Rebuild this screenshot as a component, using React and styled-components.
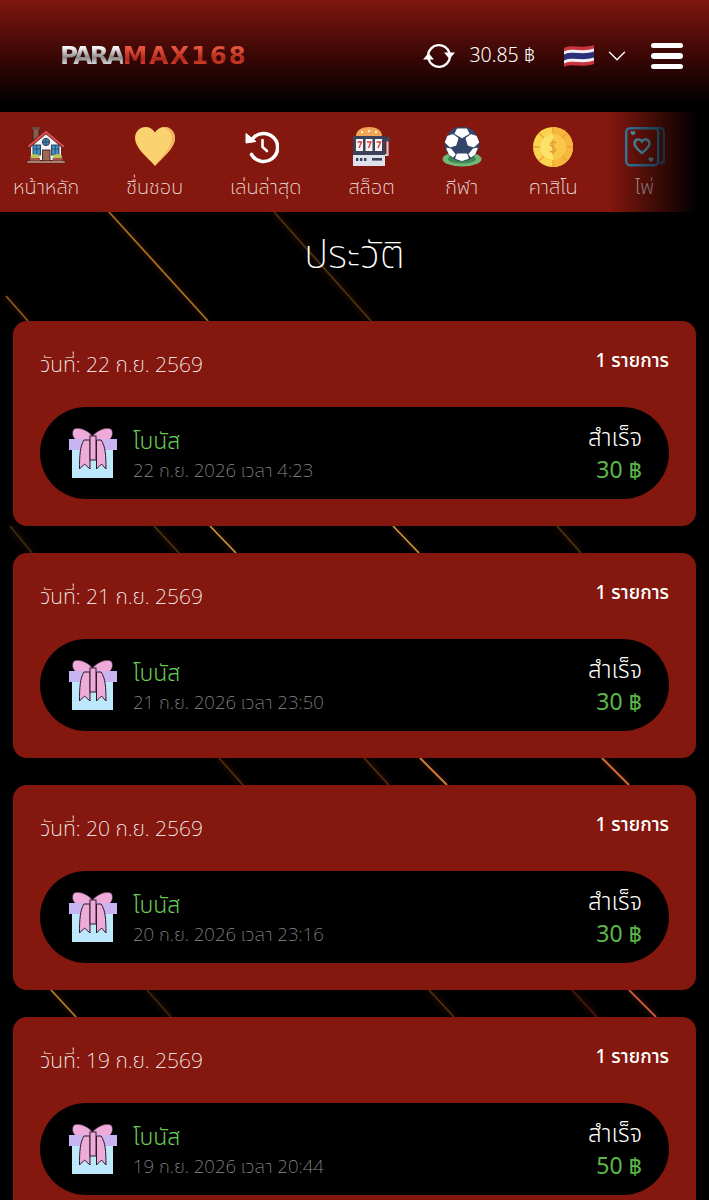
import React from 'react'
import styled, { createGlobalStyle } from 'styled-components'
import { ChevronDown } from 'lucide-react'

const GlobalStyle = createGlobalStyle`
  html, body {
    margin: 0;
    padding: 0;
    background: #000;
  }
  body {
    font-family: 'Noto Sans Thai', 'Noto Sans Thai Looped', 'Noto Sans', 'Open Sans', sans-serif;
    color: #fff;
  }
`

const menu = [
  { label: 'หน้าหลัก', icon: <HouseIcon /> },
  { label: 'ชื่นชอบ', icon: <HeartIcon /> },
  { label: 'เล่นล่าสุด', icon: <HistoryIcon /> },
  { label: 'สล็อต', icon: <SlotIcon /> },
  { label: 'กีฬา', icon: <BallIcon /> },
  { label: 'คาสิโน', icon: <ChipIcon /> },
  { label: 'ไพ่', icon: <CardsIcon /> },
]

const history = [
  { day: '22 ก.ย. 2569', time: '22 ก.ย. 2026 เวลา 4:23', amount: 30 },
  { day: '21 ก.ย. 2569', time: '21 ก.ย. 2026 เวลา 23:50', amount: 30 },
  { day: '20 ก.ย. 2569', time: '20 ก.ย. 2026 เวลา 23:16', amount: 30 },
  { day: '19 ก.ย. 2569', time: '19 ก.ย. 2026 เวลา 20:44', amount: 50 },
]

const streaks = [
  [109, 212, 208, 321, '#a8701c'],
  [274, 212, 371, 321, '#4a3510'],
  [6, 296, 28, 321, '#8a5a18'],
  [10, 526, 32, 553, '#3a2a0c'],
  [154, 526, 179, 553, '#4a3510'],
  [210, 526, 236, 553, '#c8963a'],
  [393, 526, 419, 553, '#c8963a'],
  [557, 526, 581, 553, '#4a3510'],
  [219, 758, 243, 785, '#50300f'],
  [364, 758, 389, 785, '#50300f'],
  [420, 758, 447, 785, '#d8803a'],
  [602, 758, 629, 785, '#d8703a'],
  [51, 990, 76, 1017, '#b08028'],
  [147, 990, 171, 1017, '#3a2a0c'],
  [429, 990, 454, 1017, '#50300f'],
  [572, 990, 597, 1017, '#4a1a0c'],
  [629, 990, 656, 1017, '#d0583a'],
]

function HouseIcon() {
  return (
    <svg width="40" height="40" viewBox="0 0 40 40">
      <rect x="7" y="1" width="6" height="12" fill="#8d5a50" stroke="#3a2420" strokeWidth="1" />
      <rect x="6" y="0" width="8" height="2.5" fill="#6b463e" />
      <path d="M20 5 L35 20 V33 H5 V20 Z" fill="#f4f4f6" />
      <path d="M1 19 L20 3 L39 19 L37 21 L20 7 L3 21 Z" fill="#d9484a" stroke="#4a2020" strokeWidth="0.8" />
      <circle cx="20" cy="15" r="3.6" fill="#3f8fc4" stroke="#2a2a3a" strokeWidth="0.9" />
      <path d="M20 11.5 V18.5 M16.5 15 H23.5" stroke="#2a2a3a" strokeWidth="0.7" />
      <rect x="7" y="18" width="7.5" height="10" fill="#3f8fc4" stroke="#2a3a55" strokeWidth="0.9" />
      <rect x="25.5" y="18" width="7.5" height="10" fill="#3f8fc4" stroke="#2a3a55" strokeWidth="0.9" />
      <path d="M10.7 18 V28 M29.2 18 V28 M7 22 H14.5 M25.5 22 H33" stroke="#2a3a55" strokeWidth="0.7" />
      <rect x="16.5" y="23" width="7.5" height="11" fill="#9a6a55" stroke="#3a2420" strokeWidth="0.9" />
      <ellipse cx="9" cy="29.5" rx="4.5" ry="2.6" fill="#b6c65a" />
      <ellipse cx="31.5" cy="29.5" rx="4.5" ry="2.6" fill="#b6c65a" />
      <rect x="4" y="31" width="10" height="3" fill="#a8564a" />
      <rect x="26.5" y="31" width="10" height="3" fill="#a8564a" />
      <rect x="1" y="34" width="38" height="2" fill="#d8a898" stroke="#3a2420" strokeWidth="0.6" />
    </svg>
  )
}

function HeartIcon() {
  return (
    <svg width="40" height="40" viewBox="0 0 40 40">
      <path d="M20 39 C12 30 0 21 0 11 C0 4.5 5 0 10.5 0 C14.5 0 18 2 20 5.5 C22 2 25.5 0 29.5 0 C35 0 40 4.5 40 11 C40 21 28 30 20 39 Z" fill="#fad26f" />
      <path d="M20 39 C28 30 40 21 40 11 C40 4.5 35 0 29.5 0 C28.8 0 28 0.1 27.4 0.2 C33 1 37 5.5 37 11 C37 20 27 30 20 39 Z" fill="#f2b45c" />
    </svg>
  )
}

function HistoryIcon() {
  return (
    <HistoryWrap width="34" height="34" viewBox="0 0 34 34" fill="none">
      <path d="M7.5 9 A14 14 0 1 1 6.5 24.5" stroke="#fff" strokeWidth="3.6" strokeLinecap="round" />
      <path d="M1 3.5 L11 11.5 L1 13 Z" fill="#fff" stroke="#fff" strokeWidth="1" strokeLinejoin="round" />
      <path d="M17.5 10 V17 L22 21" stroke="#fff" strokeWidth="2.6" strokeLinecap="round" />
    </HistoryWrap>
  )
}

function SlotIcon() {
  return (
    <svg width="40" height="40" viewBox="0 0 40 40">
      <path d="M4 9 C4 3 10 0 17 0 C24 0 30 3 30 9 Z" fill="#f0a654" />
      <circle cx="10" cy="5" r="1.2" fill="#fff0c8" />
      <circle cx="17" cy="4" r="1.2" fill="#fff0c8" />
      <circle cx="24" cy="5" r="1.2" fill="#fff0c8" />
      <rect x="1" y="9" width="32" height="30" fill="#3e4258" />
      <rect x="4" y="12" width="7" height="12" fill="#f4f4f6" />
      <rect x="13.5" y="12" width="7" height="12" fill="#f4f4f6" />
      <rect x="23" y="12" width="7" height="12" fill="#f4f4f6" />
      <path d="M5.5 15 H9.5 L7 21 M15 15 H19 L16.5 21 M24.5 15 H28.5 L26 21" stroke="#d8403a" strokeWidth="1.4" fill="none" />
      <rect x="1" y="28" width="32" height="11" fill="#dfe2ec" />
      <rect x="4" y="31" width="2.4" height="3" fill="#3e4258" />
      <rect x="8" y="31" width="2.4" height="3" fill="#3e4258" />
      <rect x="12" y="31" width="2.4" height="3" fill="#3e4258" />
      <rect x="20" y="31" width="10" height="2.6" fill="#3e4258" />
      <path d="M33 28 H35.5 V14" stroke="#c7cad8" strokeWidth="2.2" fill="none" />
      <circle cx="35.5" cy="12" r="2.6" fill="#3e4258" />
    </svg>
  )
}

function BallIcon() {
  return (
    <svg width="40" height="40" viewBox="0 0 40 40">
      <ellipse cx="20" cy="32" rx="19.5" ry="7.5" fill="#6fb878" />
      <ellipse cx="20" cy="32" rx="14" ry="4.5" fill="#3f8a50" />
      <circle cx="20" cy="17" r="17.2" fill="#34476a" />
      <g fill="#fff" stroke="#fff" strokeWidth="1.6" strokeLinejoin="round">
        <path d="M15.5 2.4 H24.5 L26.6 6.6 L20 10.4 L13.4 6.6 Z" />
        <path d="M6 9.6 L10.8 8 L15.6 11.4 L13.6 18 L8.4 19.6 L3.6 15.2 Z" />
        <path d="M34 9.6 L29.2 8 L24.4 11.4 L26.4 18 L31.6 19.6 L36.4 15.2 Z" />
        <path d="M5.2 21.6 L8.6 22.2 L12.8 27.4 L11 29.6 L7.8 27.4 Z" />
        <path d="M34.8 21.6 L31.4 22.2 L27.2 27.4 L29 29.6 L32.2 27.4 Z" />
        <path d="M15.4 27.4 H24.6 L26 31.2 L20 33.2 L14 31.2 Z" />
      </g>
    </svg>
  )
}

function ChipIcon() {
  return (
    <svg width="40" height="40" viewBox="0 0 40 40">
      <circle cx="20" cy="20" r="20" fill="#fbd44e" />
      <path d="M20 0 A20 20 0 0 1 20 40 Z" fill="#f7b73d" />
      <path d="M20 0 V7 M20 33 V40 M0 20 H7 M33 20 H40 M6 6 L11 11 M34 6 L29 11 M6 34 L11 29 M34 34 L29 29" stroke="#ee9f38" strokeWidth="1.4" />
      <circle cx="20" cy="20" r="12.5" fill="#fde26a" />
      <path d="M20 7.5 A12.5 12.5 0 0 1 20 32.5 Z" fill="#f9c84a" />
      <path d="M23 16 C22 14.5 17.5 14.5 17.5 17.5 C17.5 20.5 22.5 19.5 22.5 22.8 C22.5 25.5 18.5 25.5 17 24 M20 12.5 V27.5" stroke="#e59a35" strokeWidth="1.4" fill="none" />
    </svg>
  )
}

function CardsIcon() {
  return (
    <svg width="40" height="40" viewBox="0 0 40 40" fill="none">
      <path d="M30 1 H35 C37.5 1 39 3 39 5 V32 C39 35 37 36.5 35 36.5" stroke="#3f7fa8" strokeWidth="2.4" />
      <rect x="1.2" y="1.2" width="32" height="37" rx="4" stroke="#3f8fb8" strokeWidth="2.4" />
      <path d="M17 26 C12 22 9.5 19.5 9.5 16.5 C9.5 12 15 11 17 14.5 C19 11 24.5 12 24.5 16.5 C24.5 19.5 22 22 17 26 Z" stroke="#5db5d0" strokeWidth="2.4" />
      <path d="M8 8.5 C6 7 5.5 6 5.5 5.2 C5.5 3.8 7.3 3.4 8 4.6 C8.7 3.4 10.5 3.8 10.5 5.2 C10.5 6 10 7 8 8.5 Z" fill="#5db5d0" />
      <path d="M26 35 C24 33.5 23.5 32.5 23.5 31.7 C23.5 30.3 25.3 29.9 26 31.1 C26.7 29.9 28.5 30.3 28.5 31.7 C28.5 32.5 28 33.5 26 35 Z" fill="#5db5d0" />
    </svg>
  )
}

function GiftIcon() {
  return (
    <svg width="48" height="51" viewBox="0 0 48 51">
      <rect x="3" y="21" width="41" height="29" fill="#bde8fb" />
      <path d="M23.5 8 C18 1.5 9 -1 5 1 C2.5 4 3 9 7 12 H40 C44 9 44.5 4 42 1 C38 -1 29 1.5 23.5 8 Z" fill="#eeaad8" stroke="#3a2438" strokeWidth="0.6" />
      <rect x="0" y="11" width="48" height="11" fill="#c9b4f0" />
      <path d="M15 12 C11 18 10.5 28 10.5 41 L15.5 36 L21 41 V12 Z" fill="#eeaad8" stroke="#2a1a28" strokeWidth="1" />
      <path d="M32 12 C36.5 18 37 28 37 41 L32.5 36 L27.5 41 V12 Z" fill="#eeaad8" stroke="#2a1a28" strokeWidth="1" />
      <rect x="21" y="8" width="6" height="24" fill="#eeaad8" stroke="#2a1a28" strokeWidth="1" />
    </svg>
  )
}

function FlagIcon() {
  return (
    <svg width="32" height="24" viewBox="0 0 32 24">
      <path d="M1 4 C10 0 20 5 31 1 V20 C20 24 10 19 1 23 Z" fill="#c9343f" />
      <path d="M1 7.5 C10 3.5 20 8.5 31 4.5 V16.5 C20 20.5 10 15.5 1 19.5 Z" fill="#f1f1f4" />
      <path d="M1 10.5 C10 6.5 20 11.5 31 7.5 V13.5 C20 17.5 10 12.5 1 16.5 Z" fill="#2c2f7a" />
    </svg>
  )
}

function SyncIcon() {
  return (
    <svg width="32" height="28" viewBox="0 0 32 28" fill="none">
      <path d="M5 13 A11 11 0 0 1 26.5 11" stroke="#fff" strokeWidth="2.4" />
      <path d="M27 15 A11 11 0 0 1 5.5 17" stroke="#fff" strokeWidth="2.4" />
      <path d="M21 10.5 H32 L26.5 17 Z M0 17.5 H11 L5.5 11 Z" fill="#fff" />
    </svg>
  )
}

const App = () => (
  <>
    <GlobalStyle />
    <Page>
      <Streaks viewBox="0 0 709 1200" aria-hidden="true">
        {streaks.map(([x1, y1, x2, y2, color]) => (
          <line key={`${x1}-${y1}`} x1={x1} y1={y1} x2={x2} y2={y2} stroke={color} strokeWidth="1.8" />
        ))}
      </Streaks>
      <Header>
        <Logo>
          <LogoSilver>PARA</LogoSilver>
          <LogoRed>MAX168</LogoRed>
        </Logo>
        <Account>
          <SyncIcon />
          <Balance>30.85 ฿</Balance>
          <Language>
            <FlagIcon />
            <ChevronDown size={30} strokeWidth={1.1} color="#fff" />
          </Language>
          <Burger>
            <span />
            <span />
            <span />
          </Burger>
        </Account>
      </Header>
      <Menu>
        {menu.map((item) => (
          <MenuItem key={item.label}>
            <MenuIcon>{item.icon}</MenuIcon>
            <MenuLabel>{item.label}</MenuLabel>
          </MenuItem>
        ))}
      </Menu>
      <Title>ประวัติ</Title>
      <List>
        {history.map((row) => (
          <Card key={row.day}>
            <CardHead>
              <CardDate>วันที่: {row.day}</CardDate>
              <CardCount>1 รายการ</CardCount>
            </CardHead>
            <Pill>
              <GiftIcon />
              <PillInfo>
                <PillName>โบนัส</PillName>
                <PillTime>{row.time}</PillTime>
              </PillInfo>
              <PillResult>
                <PillStatus>สำเร็จ</PillStatus>
                <PillAmount>{row.amount} ฿</PillAmount>
              </PillResult>
            </Pill>
          </Card>
        ))}
      </List>
    </Page>
  </>
)

const Page = styled.div`
  position: relative;
  width: 709px;
  height: 1200px;
  overflow: hidden;
  background: #000;
`
const Streaks = styled.svg`
  position: absolute;
  inset: 0;
  width: 709px;
  height: 1200px;
  filter: blur(0.6px) drop-shadow(0 0 3px rgba(150, 50, 20, 0.6));
`
const HistoryWrap = styled.svg`
  margin-right: 8px;
`
const Header = styled.header`
  position: relative;
  height: 112px;
  box-sizing: border-box;
  padding: 0 26px 0 60px;
  display: flex;
  align-items: center;
  justify-content: space-between;
  background: linear-gradient(180deg, #7e1710 0%, #3a0705 50%, #000 92%);
`
const Logo = styled.div`
  font-family: 'DejaVu Sans', sans-serif;
  font-weight: 700;
  font-size: 24px;
  line-height: 24px;
  white-space: nowrap;
  transform: scaleX(1.03);
  transform-origin: left center;
`
const LogoSilver = styled.span`
  letter-spacing: -2.5px;
  background: linear-gradient(180deg, #f4f4f4 20%, #8c8c8c 55%, #e8e8e8 85%);
  -webkit-background-clip: text;
  background-clip: text;
  color: transparent;
`
const LogoRed = styled.span`
  letter-spacing: 1.7px;
  background: linear-gradient(180deg, #e8553f 20%, #b02a1c 60%, #d8402c 85%);
  -webkit-background-clip: text;
  background-clip: text;
  color: transparent;
`
const Account = styled.div`
  display: flex;
  align-items: center;
`
const Balance = styled.div`
  margin-left: 14px;
  font-size: 19.5px;
  font-weight: 300;
`
const Language = styled.div`
  display: flex;
  align-items: center;
  gap: 7px;
  margin-left: 28px;
`
const Burger = styled.div`
  display: flex;
  flex-direction: column;
  gap: 5px;
  margin-left: 19px;

  span {
    display: block;
    width: 32px;
    height: 5.5px;
    border-radius: 3px;
    background: #fff;
  }
`
const Menu = styled.nav`
  position: relative;
  height: 100px;
  box-sizing: border-box;
  padding-left: 13px;
  display: flex;
  gap: 47px;
  overflow: hidden;
  background: #84170e;

  &::after {
    content: '';
    position: absolute;
    top: 0;
    right: 0;
    bottom: 0;
    width: 100px;
    background: linear-gradient(90deg, rgba(0, 0, 0, 0), #000 88%);
  }
`
const MenuItem = styled.div`
  flex: none;
  display: flex;
  flex-direction: column;
  align-items: center;
  padding-top: 14px;
`
const MenuIcon = styled.div`
  height: 42px;
  display: flex;
  align-items: center;
  justify-content: center;
`
const MenuLabel = styled.div`
  margin-top: 6px;
  font-size: 20px;
  font-weight: 250;
  line-height: 28px;
  white-space: nowrap;
  color: #f6eae8;
`
const Title = styled.h1`
  position: relative;
  margin: 0;
  height: 109px;
  box-sizing: border-box;
  padding-top: 21px;
  font-size: 40px;
  font-weight: 200;
  line-height: 46px;
  text-align: center;
`
const List = styled.div`
  position: relative;
  display: flex;
  flex-direction: column;
  gap: 27px;
  padding: 0 13px;
`
const Card = styled.section`
  height: 205px;
  box-sizing: border-box;
  padding: 24px 27px 27px;
  border-radius: 14px;
  background: #84170e;
`
const CardHead = styled.div`
  display: flex;
  justify-content: space-between;
  height: 62px;
`
const CardDate = styled.div`
  padding-top: 2px;
  font-size: 21px;
  font-weight: 250;
  line-height: 38px;
`
const CardCount = styled.div`
  padding-top: 2px;
  font-size: 19px;
  font-weight: 500;
  line-height: 30px;
`
const Pill = styled.div`
  height: 92px;
  box-sizing: border-box;
  padding: 0 27px 0 29px;
  display: flex;
  align-items: center;
  gap: 16px;
  border-radius: 46px;
  background: #000;
`
const PillInfo = styled.div`
  flex: 1;
  padding-top: 6px;
`
const PillName = styled.div`
  font-size: 23px;
  font-weight: 300;
  line-height: 30px;
  color: #6ccb5a;
`
const PillTime = styled.div`
  font-size: 18.5px;
  font-weight: 250;
  line-height: 28px;
  color: #8e8e92;
`
const PillResult = styled.div`
  padding-top: 4px;
  text-align: right;
`
const PillStatus = styled.div`
  font-size: 24px;
  font-weight: 300;
  line-height: 32px;
`
const PillAmount = styled.div`
  font-size: 23px;
  font-weight: 400;
  line-height: 32px;
  color: #5cb648;
`

export default App
